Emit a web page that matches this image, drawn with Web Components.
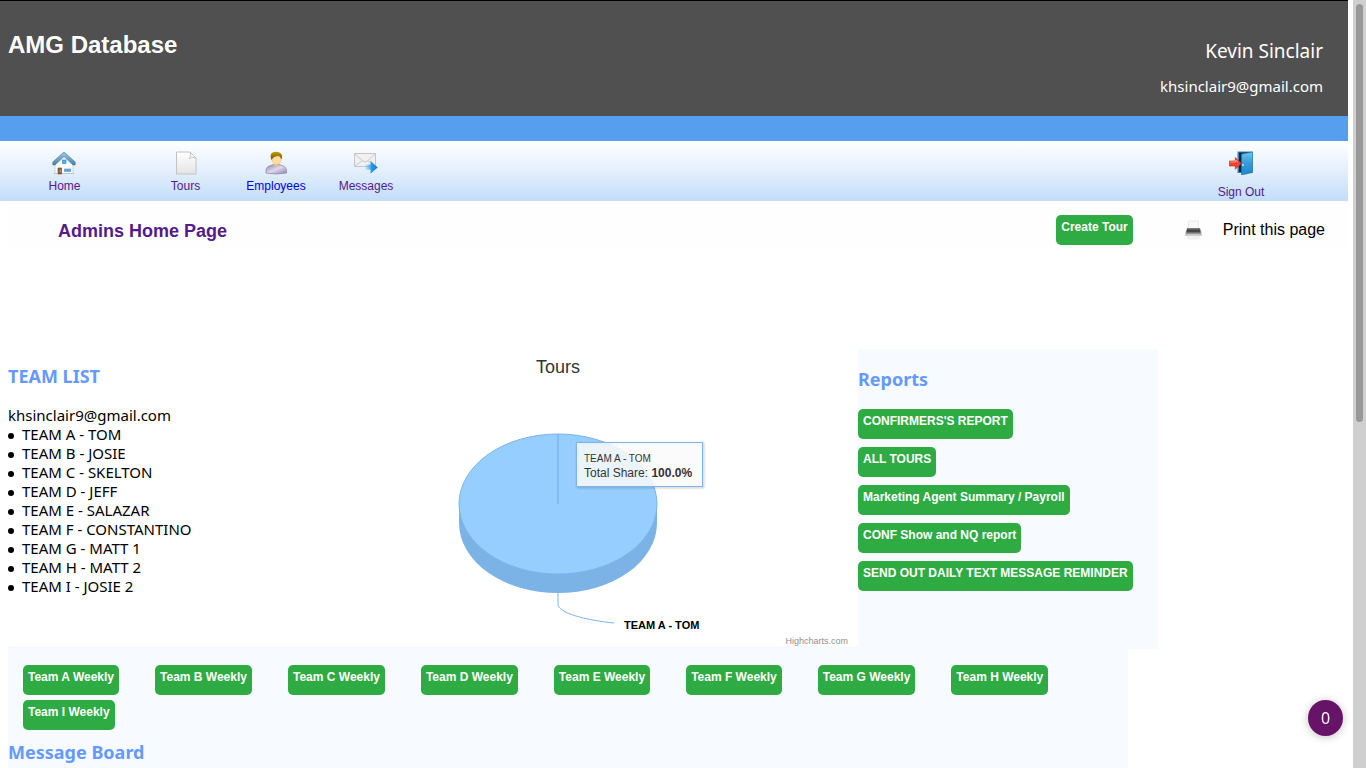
<!DOCTYPE html>
<html lang="en">
<head>
<meta charset="utf-8">
<title>AMG Database</title>
<style>
  html, body { margin: 0; height: 100%; overflow: hidden; background: #fff; }
  body { --ui: "Liberation Sans", Arial, sans-serif; --text: "Noto Sans", sans-serif; --visited: #551a8b; --accent: #6699ff; --panel: #f7fbff; font-family: var(--text); font-size: 16px; color: #000; }
</style>
</head>
<body>
<admin-page></admin-page>
<script>
const define = (name, html, setup) => {
  const template = document.createElement('template');
  template.innerHTML = html;
  customElements.define(name, class extends HTMLElement {
    constructor() {
      super();
      this.attachShadow({ mode: 'open' }).append(template.content.cloneNode(true));
    }
    connectedCallback() { if (setup) setup(this, this.shadowRoot); }
  });
};

define('site-header', `
<style>
  :host { display: block; border-top: 1px solid #000; }
  .top { display: flex; justify-content: space-between; background: #505050; color: #fff; height: 115px; }
  h1 { margin: 28px 0 0 8px; font: bold 24px/32px var(--ui); }
  .user { margin: 36px 25px 0 0; text-align: right; }
  .name { font-size: 19px; line-height: 28px; margin: 0 0 9px; }
  .mail { font-size: 15px; line-height: 24px; margin: 0; }
  .band { height: 25px; background: #559fee; }
</style>
<header><div class="top"><h1>AMG Database</h1><div class="user"><p class="name">Kevin Sinclair</p><p class="mail">khsinclair9@gmail.com</p></div></div><div class="band"></div></header>`);

define('nav-item', `
<style>
  :host { display: flex; justify-content: center; }
  a { display: flex; flex-direction: column; align-items: center; gap: var(--icon-gap, 4px); font: 12px/14px var(--ui); color: var(--link, var(--visited)); text-decoration: none; white-space: nowrap; }
  ::slotted(svg) { display: block; width: 24px; height: 24px; }
</style>
<a href="#"><slot name="icon"></slot><slot></slot></a>`);

define('main-nav', `
<style>
  :host { display: block; }
  nav { display: flex; height: 50px; padding: 10px 57px 0 4px; background: linear-gradient(#fff, #e3effc 50%, #c2ddfa); }
  .wide { width: 121px; }
  .mid { width: 60px; --link: #0000ee; }
  .msg { width: 120px; }
  .out { width: 100px; margin-left: auto; --icon-gap: 10px; }
</style>
<nav>
<nav-item class="wide"><svg slot="icon" viewBox="0 0 24 24">
  <defs><linearGradient id="roof" x2="0" y2="1"><stop stop-color="#9cc9e3"/><stop offset="1" stop-color="#4583ad"/></linearGradient></defs>
  <path d="M3 12 12 4l9 8v10.500H3z" fill="#fafafa" stroke="#bfc5cb" stroke-width=".7"/>
  <path d="M2 22.500h20" stroke="#c2c6ca"/>
  <path d="M12 1 .8 11v3L3 14l9-8.400 9 8.400 2.200 0v-3z" fill="url(#roof)" stroke="#427796" stroke-width=".6"/>
  <rect x="10.500" y="9" width="3.500" height="3.500" fill="#55b4ec" stroke="#2e7cb4" stroke-width=".6"/>
  <path d="M6 17h3.500v6H6z" fill="#96643f" stroke="#6d442c" stroke-width=".6"/><circle cx="8.500" cy="20" r=".5" fill="#eee"/>
  <path d="M12.500 18h3v2.500h-3zm3.500 0h2.500v2.500H16z" fill="#5cb7ed" stroke="#4688b9" stroke-width=".6"/></svg>Home</nav-item>
<nav-item class="wide"><svg slot="icon" viewBox="0 0 24 24">
  <defs><linearGradient id="sheet" x2="0" y2="1"><stop stop-color="#fff"/><stop offset="1" stop-color="#e4e4e4"/></linearGradient></defs>
  <path d="M2.500 1h13.500l6 6v16H2.500z" fill="url(#sheet)" stroke="#c3c3c3"/><path d="M16 1q1.500 3-.5 6.500Q19 5.500 22 7z" fill="#f7f7f7" stroke="#bdbdbd" stroke-width=".8"/></svg>Tours</nav-item>
<nav-item class="mid"><svg slot="icon" viewBox="0 0 24 24">
  <defs><linearGradient id="shirt" x2="1" y2="1"><stop stop-color="#8d7cae"/><stop offset=".5" stop-color="#dfdae9"/><stop offset="1" stop-color="#9180b0"/></linearGradient><linearGradient id="hair" x2="0" y2="1"><stop stop-color="#c2a000"/><stop offset="1" stop-color="#6c4b04"/></linearGradient></defs>
  <path d="M2 22q-.8-6 4-7.300l4-1.200h5l3.500 1.200q4.700 1.300 4 7.300Q12 24 2 22z" fill="url(#shirt)" stroke="#8c80ab" stroke-width=".7"/>
  <path d="M10 11h4.500v3.500q-2 2.200-4.500 0z" fill="#f1bd83"/><ellipse cx="12.500" cy="8" rx="4.600" ry="5.600" fill="#ffdb9e" stroke="#e2b26f" stroke-width=".5"/>
  <path d="M7.500 9Q5 3 9 1.300q5-1.600 8 1.200 2 2.500.3 6Q16.500 5 14 5 9 5.500 7.500 9z" fill="url(#hair)"/></svg>Employees</nav-item>
<nav-item class="msg"><svg slot="icon" viewBox="0 0 24 24">
  <defs><linearGradient id="arrow" x2="1"><stop stop-color="#7bc8f7" stop-opacity=".2"/><stop offset=".5" stop-color="#2e9ae6"/><stop offset="1" stop-color="#147bd0"/></linearGradient></defs>
  <path d="M.5 2.500h21v13h-21z" fill="#f0f0f0" stroke="#c5c5c5"/><path d="m1 3 8 7.300q2 1.400 4 0L21 3M1 15l7.500-5.500M21 15l-7.500-5.500" fill="none" stroke="#cbcbcb"/>
  <path d="M11 13.500h5.500V9.800l7.200 6.700-7.200 6.300v-4H11z" fill="url(#arrow)"/></svg>Messages</nav-item>
<nav-item class="out"><svg slot="icon" viewBox="0 0 24 24">
  <defs><linearGradient id="door" x2="0" y2="1"><stop stop-color="#77c1eb"/><stop offset=".5" stop-color="#329bd9"/><stop offset="1" stop-color="#2186c8"/></linearGradient></defs>
  <path d="M8.500.5h15v21.500h-15z" fill="#2d84bc"/><path d="M10 1.500h13V21H10z" fill="#0b2545"/><path d="m12.500 3 11-2v20.500l-11 2.500z" fill="url(#door)" stroke="#1f73aa" stroke-width=".6"/><circle cx="14" cy="14" r=".9" fill="#e5eef4"/>
  <path d="M.3 10h6V6.500l6 6-6 5.700V15h-6z" fill="#f34432" stroke="#c72218" stroke-width=".6"/><path d="M.8 11h6V9l2 2" stroke="#ff9789" fill="none"/></svg>Sign Out</nav-item>
</nav>`);

define('action-button', `
<style>
  :host { display: block; width: max-content; }
  button { display: block; margin: 0; border: 0; border-radius: 5px; background: #2eab42; color: #fff; padding: 5px 5px 11px; font: bold 12px/14px var(--ui); white-space: nowrap; }
</style>
<button type="button"><slot></slot></button>`);

define('page-toolbar', `
<style>
  :host { display: flex; align-items: flex-start; height: 48px; margin-left: 8px; padding: 0 23px 0 50px; background: #fefefe; }
  h2 { margin: 20px auto 0 0; font: bold 18px/20px var(--ui); }
  h2 a { color: var(--visited); text-decoration: none; }
  action-button { margin: 14px 50px 0 0; }
  .print { display: flex; align-items: center; gap: 20px; margin-top: 19px; color: #000; font: 16px/20px var(--ui); text-decoration: none; }
  svg { display: block; width: 20px; height: 20px; }
</style>
<h2><a href="#">Admins Home Page</a></h2>
<action-button>Create Tour</action-button>
<a class="print" href="#"><svg viewBox="0 0 20 20">
  <defs><linearGradient id="tray" x2="0" y2="1"><stop stop-color="#888"/><stop offset=".5" stop-color="#343434"/><stop offset="1" stop-color="#aaa"/></linearGradient></defs>
  <path d="M5.500 1h10v9h-10z" fill="#f9f9f9" stroke="#e4e4e4" stroke-width=".8"/><path d="M4.500 8h12l2.500 4v4H2v-4z" fill="#d7d7d7"/><path d="M4 8h13l1 6H3z" fill="url(#tray)"/><path d="M2.500 15h16" stroke="#b5b5b5"/><path d="M5 16h11v3H5z" fill="#f5f5f5" stroke="#e5e5e5" stroke-width=".6"/></svg>Print this page</a>`);

define('section-title', `
<style>:host { display: block; } h3 { margin: 0; font: bold 18px/24px var(--text); color: var(--accent); }</style>
<h3><slot></slot></h3>`);

define('team-list', `
<style>
  :host { display: block; padding-top: 18px; }
  p { margin: 18px 0 0; font-size: 15px; line-height: 19px; }
  ul { margin: 0; padding: 0; list-style: none; font-size: 15px; line-height: 19px; }
  li { display: flex; align-items: center; gap: 8px; white-space: nowrap; }
  li::before { content: ""; width: 6px; height: 6px; margin-top: 2px; border-radius: 50%; background: #000; }
</style>
<section-title>TEAM LIST</section-title>
<p>khsinclair9@gmail.com</p>
<ul><li>TEAM A - TOM</li><li>TEAM B - JOSIE</li><li>TEAM C - SKELTON</li><li>TEAM D - JEFF</li><li>TEAM E - SALAZAR</li><li>TEAM F - CONSTANTINO</li><li>TEAM G - MATT 1</li><li>TEAM H - MATT 2</li><li>TEAM I - JOSIE 2</li></ul>`);

define('tours-chart', `
<style>
  :host { display: block; background: #fff; }
  svg { display: block; width: 100%; height: auto; font-family: var(--ui); }
</style>
<svg viewBox="0 0 600 300" role="img" aria-label="Tours by team">
  <defs><filter id="shade" x="-10%" y="-10%" width="120%" height="130%"><feDropShadow dx="1" dy="1" stdDeviation="1" flood-opacity=".35"/></filter></defs>
  <text x="300" y="27" text-anchor="middle" font-size="18" fill="#333">Tours</text>
  <path d="M201 158v19a99 70 0 0 0 198 0v-19z" fill="#7cb3e6"/>
  <ellipse cx="300" cy="158" rx="99" ry="70" fill="#95ceff" stroke="#7cb5ec"/>
  <path d="M300 88v70" stroke="#7cb5ec" stroke-width="1.500"/>
  <path d="M300 247v11c0 9 27 16 56 19" fill="none" stroke="#7cb5ec"/>
  <text x="366" y="283" font-size="11" font-weight="bold">TEAM A - TOM</text>
  <path d="M318.500 96.500h126v44h-126z" fill="none" stroke="#7cb5ec" filter="url(#shade)"/>
  <path d="M318.500 96.500h126v44h-126z" fill="#fafafa" fill-opacity=".85" stroke="#7cb5ec"/>
  <text x="326" y="116" font-size="10" fill="#333">TEAM A - TOM</text>
  <text x="326" y="131" font-size="12" fill="#333">Total Share: <tspan font-weight="bold">100.0%</tspan></text>
  <a href="#"><text x="590" y="298" text-anchor="end" font-size="9" fill="#909090">Highcharts.com</text></a>
</svg>`);

define('reports-panel', `
<style>
  :host { display: flex; flex-direction: column; gap: 8px; background: var(--panel); padding-top: 18px; margin: 3px 0 -3px; box-sizing: border-box; }
  section-title { margin-bottom: 10px; }
</style>
<section-title>Reports</section-title>
<action-button>CONFIRMERS'S REPORT</action-button>
<action-button>ALL TOURS</action-button>
<action-button>Marketing Agent Summary / Payroll</action-button>
<action-button>CONF Show and NQ report</action-button>
<action-button>SEND OUT DAILY TEXT MESSAGE REMINDER</action-button>`);

define('weekly-panel', `
<style>
  :host { display: block; background: var(--panel); padding-top: 19px; }
  .buttons { display: flex; flex-wrap: wrap; gap: 5px 36px; padding: 0 15px 10px; }
</style>
<div class="buttons"></div>
<section-title>Message Board</section-title>`, (host, root) => {
  const box = root.querySelector('.buttons');
  if (box.childElementCount) return;
  for (const letter of 'ABCDEFGHI') {
    const button = document.createElement('action-button');
    button.textContent = `Team ${letter} Weekly`;
    box.append(button);
  }
});

define('scroll-rail', `
<style>
  :host { display: block; background: #cfcfcf; padding: 4px 3px; }
  div { height: 55%; border-radius: 4px; background: #989898; }
</style>
<div></div>`);

define('count-badge', `
<style>
  :host { display: block; position: fixed; right: 23px; bottom: 32px; }
  button { display: block; width: 35px; height: 36px; padding: 0; border: 0; border-radius: 50%; background: #671368; color: #fff; font: 16px/36px var(--text); text-align: center; box-shadow: 0 1px 8px rgba(0,0,0,.25); }
</style>
<button type="button"><slot></slot></button>`);

define('admin-page', `
<style>
  :host { display: grid; grid-template-columns: minmax(0, 1fr) 13px; height: 100vh; overflow: hidden; }
  .page { padding-right: 5px; overflow: hidden; }
  .dashboard { display: grid; grid-template-columns: 5fr 12fr 6fr; max-width: 1150px; margin: 97px 0 0 8px; }
  weekly-panel { max-width: 1120px; min-height: 300px; margin-left: 8px; }
</style>
<div class="page">
  <site-header></site-header>
  <main-nav></main-nav>
  <main>
    <page-toolbar></page-toolbar>
    <div class="dashboard"><team-list></team-list><tours-chart></tours-chart><reports-panel></reports-panel></div>
    <weekly-panel></weekly-panel>
  </main>
</div>
<scroll-rail></scroll-rail>
<count-badge>0</count-badge>`);
</script>
</body>
</html>
